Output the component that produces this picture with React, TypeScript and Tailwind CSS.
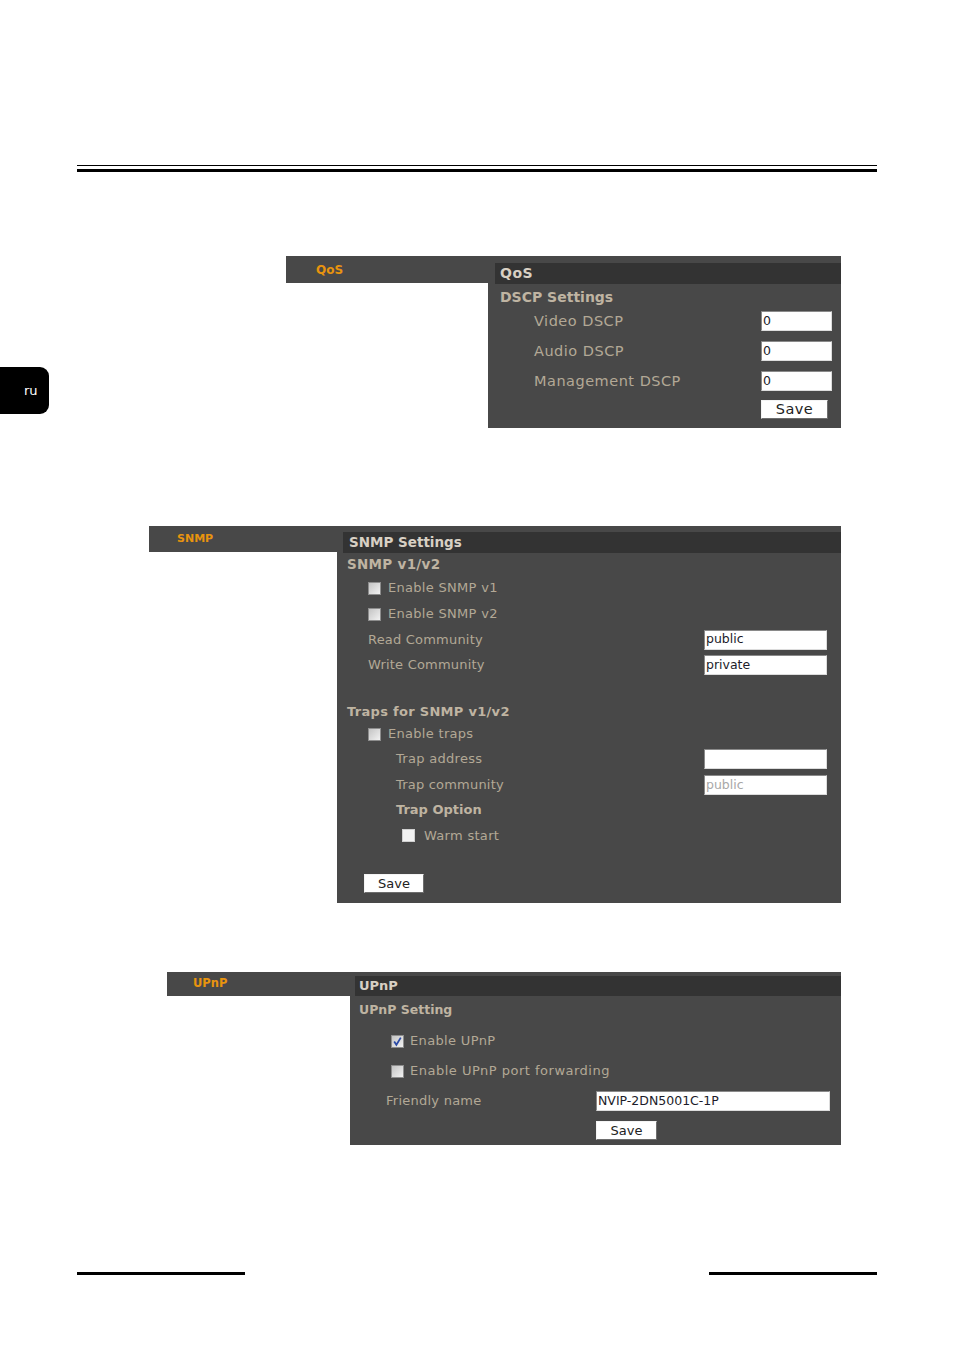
const font = "font-['DejaVu_Sans',Verdana,sans-serif]";

const label = "text-[13px] text-[#b3a896]";
const heading = "font-bold text-[#bfb4a2]";

function TextBox({ value, width, muted }: { value: string; width: string; muted?: boolean }) {
  return (
    <div
      className={`${width} h-[20px] bg-white border border-t-[#8a8a8a] border-l-[#8a8a8a] border-b-[#dcdcdc] border-r-[#dcdcdc] flex items-center pl-[1px] text-[12.5px] leading-none ${
        muted ? "text-[#a8a8a8]" : "text-[#1c1c2a]"
      }`}
    >
      {value}
    </div>
  );
}

function SaveButton({ width, size = "text-[13px]" }: { width: string; size?: string }) {
  return (
    <div
      className={`${width} ${size} h-[19px] bg-white border border-t-[#f4f4f4] border-l-[#f4f4f4] border-b-[#6e6e6e] border-r-[#6e6e6e] flex items-center justify-center text-[#222]`}
    >
      Save
    </div>
  );
}

// greyed-out checkbox, as the browser draws a disabled input
function Check({ checked, plain }: { checked?: boolean; plain?: boolean }) {
  if (plain) {
    return <span className="block w-[13px] h-[13px] bg-[#f2f2f2] border border-[#d0d0d0]" />;
  }
  return (
    <span className="relative block w-[13px] h-[13px] border border-[#8d8d8d] bg-gradient-to-br from-[#c4c4c4] to-[#f2f2f2]">
      {checked && (
        <svg viewBox="0 0 10 10" className="absolute inset-0 w-full h-full">
          <path d="M2 5 L4 8 L8 1.5" fill="none" stroke="#2b4aa6" strokeWidth="1.6" />
        </svg>
      )}
    </span>
  );
}

function Tab({ name, width, height, pad, size }: { name: string; width: string; height: string; pad: string; size: string }) {
  return (
    <div className={`${width} ${height} ${pad} ${size} shrink-0 bg-[#484848] flex items-center font-bold text-[#e8940e]`}>
      {name}
    </div>
  );
}

function QosBlock() {
  const rows = ["Video DSCP", "Audio DSCP", "Management DSCP"];
  return (
    <div className="mt-[84px] ml-[286px] flex items-start">
      <Tab name="QoS" width="w-[202px]" height="h-[27px]" pad="pl-[30px]" size="text-[12px]" />
      <div className="w-[353px] h-[172px] bg-[#484848] pt-[7px] pl-[7px]">
        <div className="h-[21px] bg-[#333333] flex items-center pl-[5px] text-[14px] font-bold tracking-[0.5px] text-[#d8d0c4]">QoS</div>
        <div className="-ml-[7px]">
          <div className={`h-[22px] pt-[4px] flex items-center pl-[12px] text-[14px] ${heading}`}>DSCP Settings</div>
          {rows.map((r) => (
            <div key={r} className="h-[30px] flex items-center justify-between pl-[46px] pr-[9px]">
              <span className="text-[14.5px] tracking-[0.5px] text-[#b3a896] pt-[2px]">{r}</span>
              <TextBox value="0" width="w-[71px]" />
            </div>
          ))}
          <div className="mt-[4px] pl-[273px]">
            <SaveButton width="w-[67px]" size="text-[14.5px] tracking-[0.5px]" />
          </div>
        </div>
      </div>
    </div>
  );
}

function SnmpBlock() {
  return (
    <div className="mt-[98px] ml-[149px] flex items-start">
      <Tab name="SNMP" width="w-[188px]" height="h-[26px]" pad="pl-[28px]" size="text-[11px]" />
      <div className="w-[504px] h-[377px] bg-[#484848] pt-[6px] pl-[6px]">
        <div className="h-[21px] bg-[#333333] flex items-center pl-[6px] text-[13.5px] font-bold text-[#d8d0c4]">SNMP Settings</div>
        <div className="-ml-[6px]">
          <div className={`h-[22px] pt-[1px] flex items-center pl-[10px] text-[13.5px] tracking-[0.3px] ${heading}`}>SNMP v1/v2</div>
          <div className="h-[26px] flex items-center gap-[7px] pl-[31px]">
            <Check />
            <span className={`${label} tracking-[0.3px]`}>Enable SNMP v1</span>
          </div>
          <div className="h-[26px] flex items-center gap-[7px] pl-[31px]">
            <Check />
            <span className={`${label} tracking-[0.3px]`}>Enable SNMP v2</span>
          </div>
          <div className="h-[25px] flex items-center justify-between pl-[31px] pr-[14px]">
            <span className={`${label} tracking-[0.2px]`}>Read Community</span>
            <TextBox value="public" width="w-[123px]" />
          </div>
          <div className="h-[26px] flex items-center justify-between pl-[31px] pr-[14px]">
            <span className={`${label} tracking-[0.2px]`}>Write Community</span>
            <TextBox value="private" width="w-[123px]" />
          </div>
          <div className={`mt-[22px] h-[22px] pt-[1px] flex items-center pl-[10px] text-[13px] tracking-[0.3px] ${heading}`}>Traps for SNMP v1/v2</div>
          <div className="h-[24px] flex items-center gap-[7px] pl-[31px]">
            <Check />
            <span className={`${label} tracking-[0.3px]`}>Enable traps</span>
          </div>
          <div className="h-[26px] flex items-center justify-between pl-[59px] pr-[14px]">
            <span className={`${label} tracking-[0.3px]`}>Trap address</span>
            <TextBox value="" width="w-[123px]" />
          </div>
          <div className="h-[26px] flex items-center justify-between pl-[59px] pr-[14px]">
            <span className={`${label} tracking-[0.2px]`}>Trap community</span>
            <TextBox value="public" width="w-[123px]" muted />
          </div>
          <div className={`h-[24px] flex items-center pl-[59px] text-[13px] ${heading}`}>Trap Option</div>
          <div className="h-[27px] flex items-center gap-[9px] pl-[65px]">
            <Check plain />
            <span className={`${label} tracking-[0.3px]`}>Warm start</span>
          </div>
          <div className="mt-[25px] pl-[27px]">
            <SaveButton width="w-[60px]" />
          </div>
        </div>
      </div>
    </div>
  );
}

function UpnpBlock() {
  return (
    <div className="mt-[69px] ml-[167px] flex items-start">
      <Tab name="UPnP" width="w-[183px]" height="h-[24px]" pad="pl-[26px]" size="text-[11.5px]" />
      <div className="w-[491px] h-[173px] bg-[#484848] pt-[4px] pl-[5px]">
        <div className="h-[20px] bg-[#333333] flex items-center pl-[4px] text-[13px] font-bold text-[#d8d0c4]">UPnP</div>
        <div className="-ml-[5px]">
          <div className={`h-[28px] pt-[1px] flex items-center pl-[9px] text-[12.5px] ${heading}`}>UPnP Setting</div>
          <div className="mt-[2px] h-[30px] flex items-center gap-[6px] pl-[41px]">
            <Check checked />
            <span className={`${label} text-[13.5px] tracking-[0.35px]`}>Enable UPnP</span>
          </div>
          <div className="h-[30px] flex items-center gap-[6px] pl-[41px]">
            <Check />
            <span className={`${label} text-[13.5px] tracking-[0.5px]`}>Enable UPnP port forwarding</span>
          </div>
          <div className="h-[30px] flex items-center pl-[36px]">
            <span className={`${label} text-[13.5px] tracking-[0.25px] w-[210px]`}>Friendly name</span>
            <TextBox value="NVIP-2DN5001C-1P" width="w-[234px]" />
          </div>
          <div className="mt-[5px] pl-[246px]">
            <SaveButton width="w-[61px]" />
          </div>
        </div>
      </div>
    </div>
  );
}

export default function App() {
  return (
    <div className={`relative w-[954px] h-[1350px] bg-white flex flex-col ${font}`}>
      <div className="pt-[165px] px-[77px]">
        <div className="h-px bg-black" />
        <div className="mt-[3px] h-[3px] bg-black" />
      </div>

      {/* language marker on the page edge */}
      <div className="absolute left-0 top-[367px] w-[49px] h-[47px] bg-black rounded-r-[9px] flex items-center pl-[24px] text-[13px] text-white font-['DejaVu_Sans',sans-serif]">
        ru
      </div>

      <QosBlock />
      <SnmpBlock />
      <UpnpBlock />

      <div className="mt-[127px] px-[77px] flex justify-between">
        <div className="w-[168px] h-[3px] bg-black" />
        <div className="w-[168px] h-[3px] bg-black" />
      </div>
    </div>
  );
}
